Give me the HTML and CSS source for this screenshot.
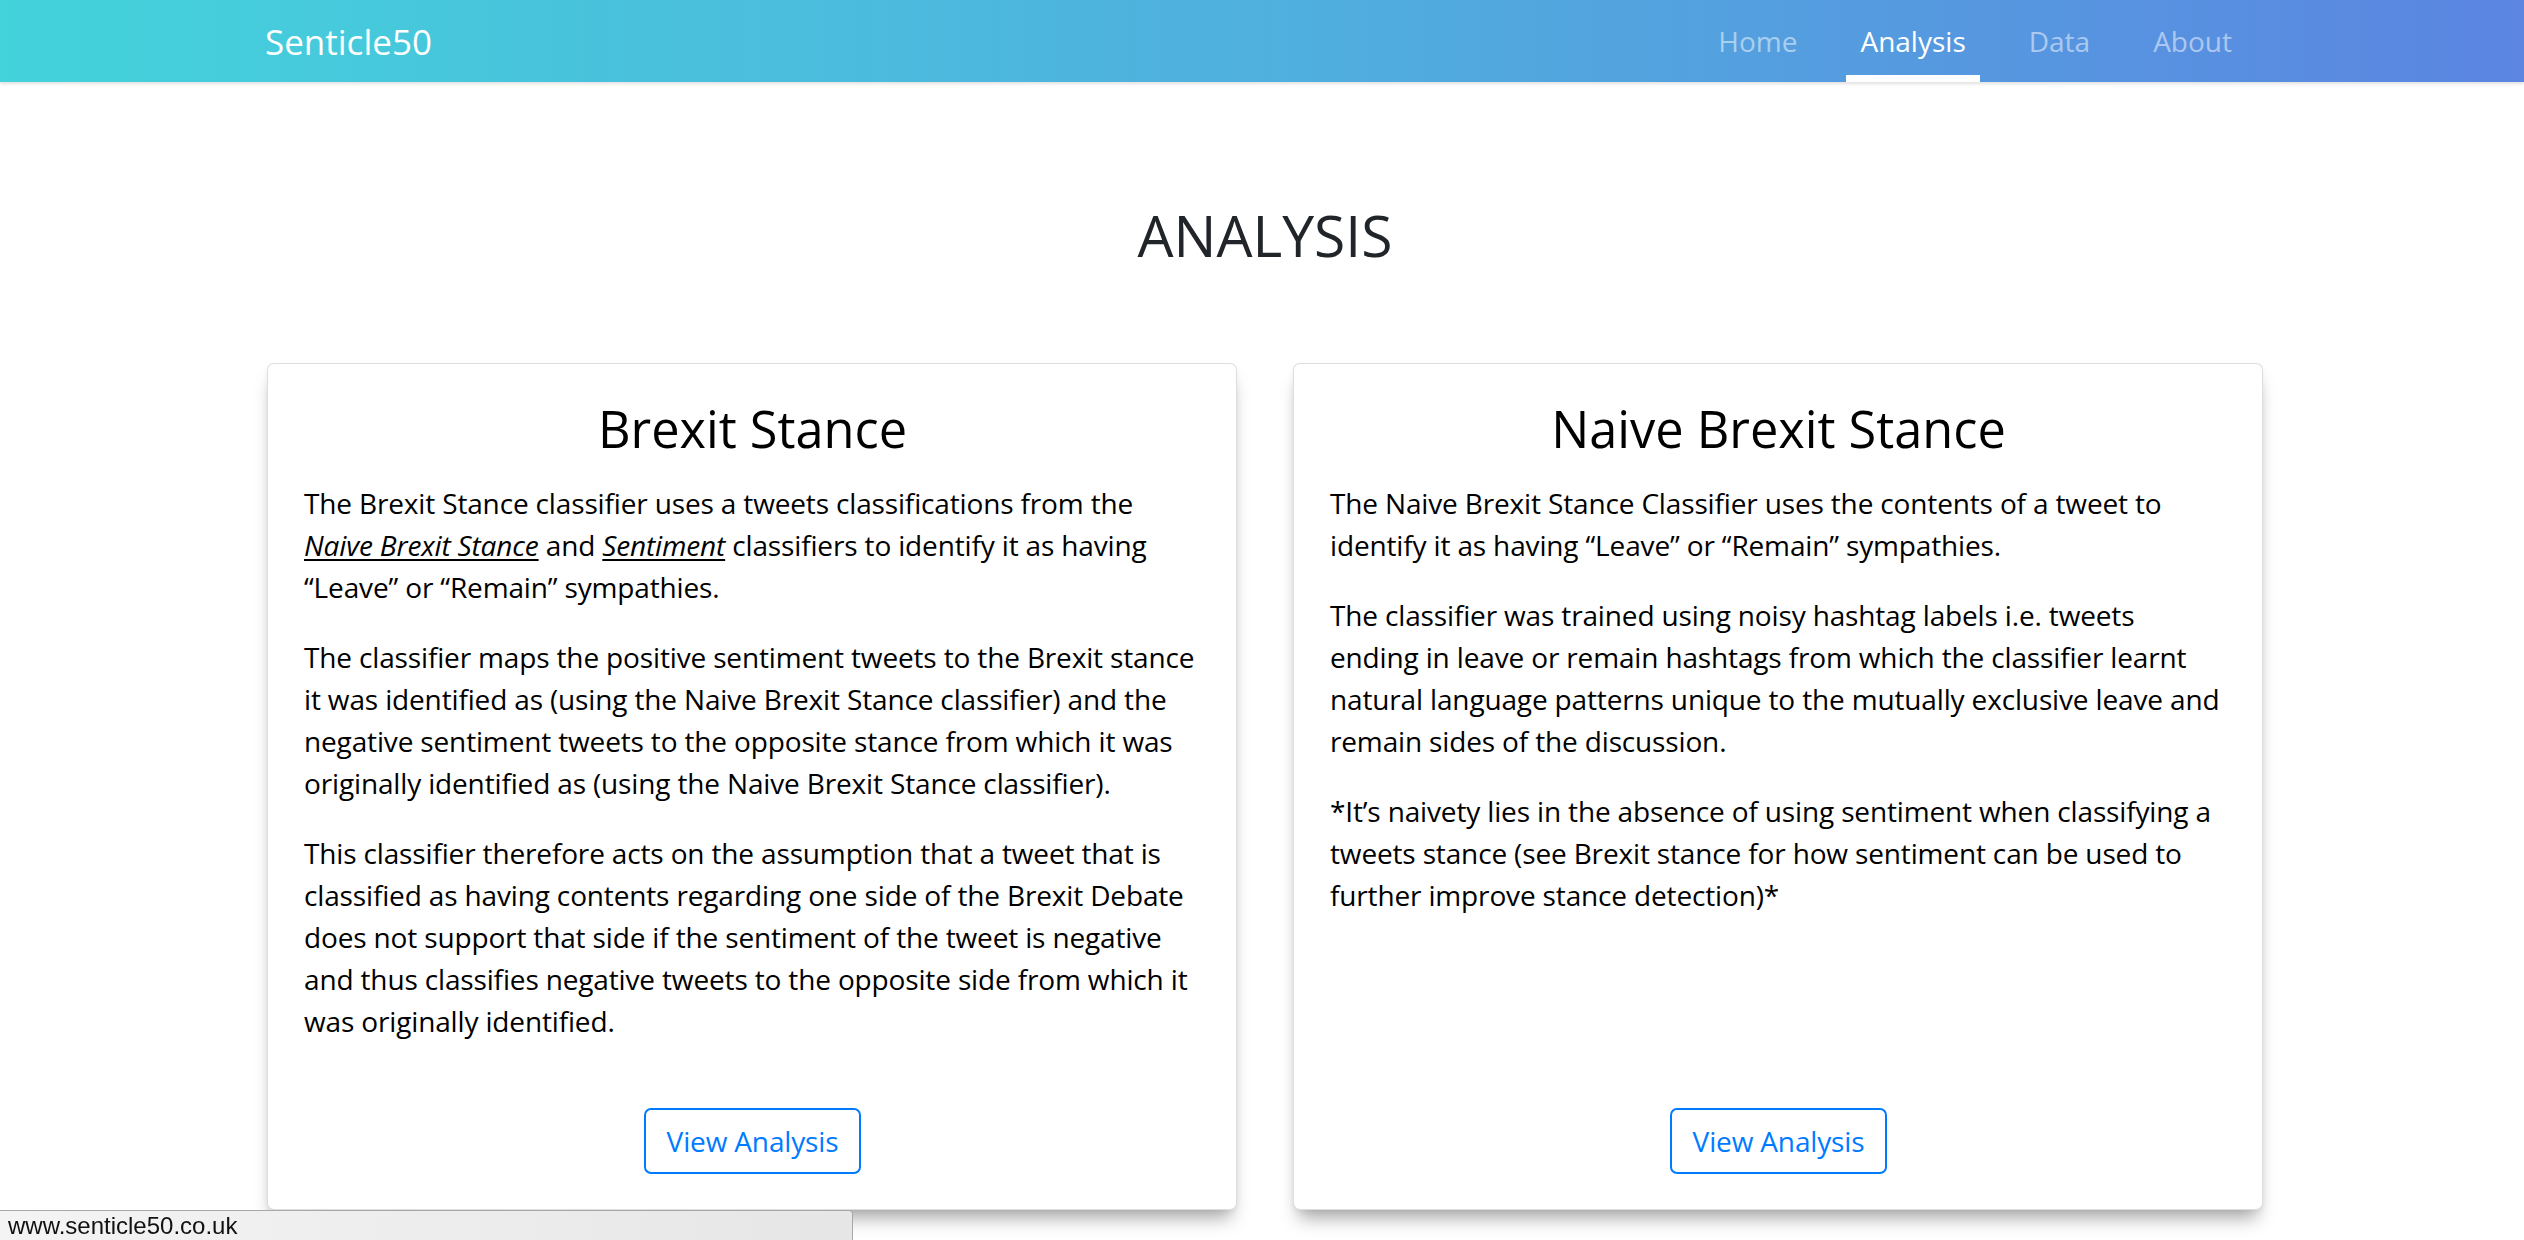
FILE: index.html
```html
<!DOCTYPE html>
<html lang="en">
<head>
<meta charset="utf-8">
<title>Senticle50 - Analysis</title>
<link rel="stylesheet" href="styles.css">
</head>
<body>
<header class="navbar">
  <div class="nav-container">
    <a class="brand" href="#">Senticle50</a>
    <nav class="nav-links">
      <a class="nav-link" href="#">Home</a>
      <a class="nav-link active" href="#">Analysis</a>
      <a class="nav-link" href="#">Data</a>
      <a class="nav-link" href="#">About</a>
    </nav>
  </div>
</header>

<main class="main">
  <h2 class="page-title">ANALYSIS</h2>
  <div class="card-row">
    <section class="card">
      <div class="card-body">
        <h3 class="card-title">Brexit Stance</h3>
        <p>The Brexit Stance classifier uses a tweets classifications from the <a class="ref" href="#"><em>Naive Brexit Stance</em></a> and <a class="ref" href="#"><em>Sentiment</em></a> classifiers to identify it as having “Leave” or “Remain” sympathies.</p>
        <p>The classifier maps the positive sentiment tweets to the Brexit stance it was identified as (using the Naive Brexit Stance classifier) and the negative sentiment tweets to the opposite stance from which it was originally identified as (using the Naive Brexit Stance classifier).</p>
        <p>This classifier therefore acts on the assumption that a tweet that is classified as having contents regarding one side of the Brexit Debate does not support that side if the sentiment of the tweet is negative and thus classifies negative tweets to the opposite side from which it was originally identified.</p>
        <div class="card-action">
          <a class="btn-outline" href="#">View Analysis</a>
        </div>
      </div>
    </section>
    <section class="card">
      <div class="card-body">
        <h3 class="card-title">Naive Brexit Stance</h3>
        <p>The Naive Brexit Stance Classifier uses the contents of a tweet to identify it as having “Leave” or “Remain” sympathies.</p>
        <p>The classifier was trained using noisy hashtag labels i.e. tweets ending in leave or remain hashtags from which the classifier learnt natural language patterns unique to the mutually exclusive leave and remain sides of the discussion.</p>
        <p>*It’s naivety lies in the absence of using sentiment when classifying a tweets stance (see Brexit stance for how sentiment can be used to further improve stance detection)*</p>
        <div class="card-action">
          <a class="btn-outline" href="#">View Analysis</a>
        </div>
      </div>
    </section>
  </div>
</main>

<div class="status-bubble">www.senticle50.co.uk</div>
</body>
</html>
```

FILE: styles.css
```css
* { box-sizing: border-box; }

html, body {
  margin: 0;
  padding: 0;
  background: #fff;
}

body {
  font-family: "Open Sans", "Noto Sans", sans-serif;
  font-size: 28px;
  line-height: 1.5;
  color: #212529;
  height: 1240px;
  overflow: hidden;
}

a { text-decoration: none; }

/* NAVBAR */
.navbar {
  height: 82px;
  background: linear-gradient(to right, #43d3db 0%, #4fb0de 50%, #5b85e1 100%);
  box-shadow: 0 2px 3px rgba(0, 0, 0, 0.12);
  position: relative;
  z-index: 2;
}

.nav-container {
  width: 1996px;
  margin: 0 auto;
  height: 100%;
  display: flex;
  align-items: center;
  justify-content: space-between;
  padding: 0 14px 0 1px;
}

.brand {
  color: #fff;
  font-size: 35px;
  line-height: 1;
}

.nav-links {
  display: flex;
  height: 100%;
  gap: 35px;
}

.nav-link {
  position: relative;
  display: flex;
  align-items: center;
  padding: 0 14px;
  color: rgba(255, 255, 255, 0.5);
  font-size: 28px;
}

.nav-link.active {
  color: #fff;
}

.nav-link.active::after {
  content: "";
  position: absolute;
  left: 0;
  right: 0;
  bottom: 0;
  height: 7px;
  background: #fff;
}

/* MAIN */
.main {
  width: 2002px;
  margin: 0 auto;
  padding: 119px 0 0 6px;
}

.page-title {
  margin: 0;
  font-size: 57px;
  font-weight: 400;
  line-height: 1.2;
  text-align: center;
  color: #212529;
}

.card-row {
  display: flex;
  gap: 56px;
  margin-top: 94px;
}

.card {
  flex: 1 1 0;
  background: #fff;
  border: 1px solid rgba(0, 0, 0, 0.13);
  border-radius: 7px;
  box-shadow: 0 14px 18px -6px rgba(0, 0, 0, 0.34), 0 2px 6px rgba(0, 0, 0, 0.05);
  display: flex;
}

.card-body {
  flex: 1;
  display: flex;
  flex-direction: column;
  padding: 35px 35px 35px 36px;
  color: #000;
  letter-spacing: -0.15px;
}

.card-title {
  margin: 0 0 22px;
  font-size: 50.5px;
  font-weight: 400;
  line-height: 1.2;
  text-align: center;
  letter-spacing: 0;
}

.card-body p {
  margin: 0 0 28px;
}

.ref {
  color: #000;
  text-decoration: underline;
  text-decoration-thickness: 2px;
  text-underline-offset: 3px;
}

.card-action {
  margin-top: auto;
  padding-top: 38px;
  display: flex;
  justify-content: center;
}

.btn-outline {
  display: inline-block;
  padding: 10px 21px;
  border: 2px solid #007bff;
  border-radius: 7px;
  color: #007bff;
  font-size: 28px;
  line-height: 42px;
}

/* Browser status bubble overlay */
.status-bubble {
  position: fixed;
  left: 0;
  bottom: 0;
  width: 853px;
  height: 30px;
  padding: 0 0 0 8px;
  background: linear-gradient(to right, #f4f4f4, #e6e6e6);
  border-top: 1px solid #a8a8a8;
  border-right: 1px solid #a8a8a8;
  border-top-right-radius: 4px;
  font-family: "Liberation Sans", Arial, sans-serif;
  font-size: 24px;
  line-height: 30px;
  color: #111;
  z-index: 5;
}
```
